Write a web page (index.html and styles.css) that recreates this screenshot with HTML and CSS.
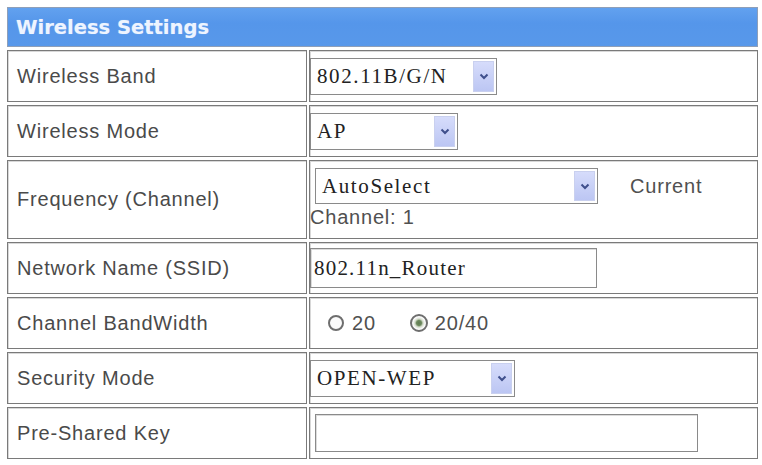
FILE: index.html
```html
<!DOCTYPE html>
<html>
<head>
<meta charset="utf-8">
<title>Wireless Settings</title>
<link rel="stylesheet" href="styles.css">
</head>
<body>
<div class="settings">
  <div class="head">Wireless Settings</div>

  <div class="label">Wireless Band</div>
  <div class="value">
    <div class="select w-band"><span class="val">802.11B/G/N</span><span class="btn"><svg viewBox="0 0 10 7" width="10" height="7"><path d="M1.5 1.5 L5 5 L8.5 1.5" fill="none" stroke="#3f4f8c" stroke-width="2"/></svg></span></div>
  </div>

  <div class="label">Wireless Mode</div>
  <div class="value">
    <div class="select w-mode"><span class="val">AP</span><span class="btn"><svg viewBox="0 0 10 7" width="10" height="7"><path d="M1.5 1.5 L5 5 L8.5 1.5" fill="none" stroke="#3f4f8c" stroke-width="2"/></svg></span></div>
  </div>

  <div class="label">Frequency (Channel)</div>
  <div class="value freq">
    <div class="freq-line">
      <div class="select w-freq"><span class="val">AutoSelect</span><span class="btn"><svg viewBox="0 0 10 7" width="10" height="7"><path d="M1.5 1.5 L5 5 L8.5 1.5" fill="none" stroke="#3f4f8c" stroke-width="2"/></svg></span></div>
      <span class="note current">Current</span>
    </div>
    <div class="note channel">Channel: 1</div>
  </div>

  <div class="label">Network Name (SSID)</div>
  <div class="value">
    <div class="input w-ssid">802.11n_Router</div>
  </div>

  <div class="label">Channel BandWidth</div>
  <div class="value radios">
    <span class="radio"></span><span class="note rtext">20</span>
    <span class="radio checked"></span><span class="note rtext">20/40</span>
  </div>

  <div class="label">Security Mode</div>
  <div class="value">
    <div class="select w-sec"><span class="val">OPEN-WEP</span><span class="btn"><svg viewBox="0 0 10 7" width="10" height="7"><path d="M1.5 1.5 L5 5 L8.5 1.5" fill="none" stroke="#3f4f8c" stroke-width="2"/></svg></span></div>
  </div>

  <div class="label">Pre-Shared Key</div>
  <div class="value">
    <div class="input w-psk"></div>
  </div>
</div>
</body>
</html>
```
FILE: styles.css
```css
html, body {
  margin: 0;
  padding: 0;
  background: #ffffff;
}

.settings {
  display: grid;
  grid-template-columns: 300px 449px;
  grid-template-rows: 40px 52px 52px 79px 52px 52px 52px 52px;
  column-gap: 2px;
  row-gap: 3px;
  margin: 7px 0 0 7px;
  width: 751px;
}

.head {
  grid-column: 1 / 3;
  box-sizing: border-box;
  border: 1px solid #8f9fb8;
  background: linear-gradient(#62a1ef, #5596ea 40%, #5898ea);
  color: #eef4ff;
  font-family: "DejaVu Sans", Verdana, sans-serif;
  font-weight: bold;
  font-size: 19.5px;
  display: flex;
  align-items: center;
  padding-left: 8px;
  text-shadow: 0 0 1px rgba(255,255,255,0.4);
}

.label,
.value {
  box-sizing: border-box;
  border: 1px solid #7a7a7a;
  box-shadow: inset 1px 1px 0 #d8d8d8;
  background: #fff;
  display: flex;
  align-items: center;
}

.label {
  padding-left: 9px;
  font-family: "Liberation Sans", Arial, sans-serif;
  font-size: 20px;
  letter-spacing: 0.8px;
  color: #4a4a4a;
}

.value {
  padding-left: 0;
}

.select {
  box-sizing: border-box;
  height: 37px;
  border: 1px solid #8a8a8a;
  background: #fff;
  display: flex;
  align-items: stretch;
  padding: 2px;
  font-family: "Liberation Serif", "Times New Roman", serif;
  font-size: 21px;
  letter-spacing: 1.6px;
  color: #222;
}

.select .val {
  flex: 1;
  display: flex;
  align-items: center;
  padding-left: 4px;
  white-space: nowrap;
  overflow: hidden;
}

.select .btn {
  width: 21px;
  background: linear-gradient(#d6dcfb, #bcc6f3);
  border: 1px solid #c9d0ef;
  box-sizing: border-box;
  display: flex;
  align-items: center;
  justify-content: center;
}

.w-band { width: 187px; }
.w-mode { width: 148px; }
.w-freq { width: 283px; height: 36px; margin-left: 5px; }
.w-sec { width: 205px; }

.input {
  box-sizing: border-box;
  border: 1px solid #8a8a8a;
  box-shadow: inset 1px 1px 0 #dcdcdc;
  background: #fff;
  display: flex;
  align-items: center;
  padding-left: 3px;
  font-family: "Liberation Serif", "Times New Roman", serif;
  font-size: 21px;
  letter-spacing: 1.2px;
  color: #222;
}

.w-ssid { width: 287px; height: 40px; }
.w-psk { width: 383px; height: 38px; margin-left: 5px; }

.note {
  font-family: "Liberation Sans", Arial, sans-serif;
  font-size: 20px;
  letter-spacing: 0.8px;
  color: #505050;
}

.freq {
  flex-direction: column;
  align-items: flex-start;
  justify-content: flex-start;
  padding-top: 7px;
}

.freq-line {
  display: flex;
  align-items: center;
}

.current {
  margin-left: 32px;
}

.channel {
  margin-top: 1px;
  line-height: 24px;
}

.radios {
  padding-left: 18px;
}

.radio {
  box-sizing: border-box;
  width: 16px;
  height: 16px;
  border-radius: 50%;
  border: 2px solid #6e6e6e;
  background: #fbfbfb;
  margin-right: 8px;
}

.radio.checked {
  margin-left: 34px;
  margin-right: 7px;
  width: 18px;
  height: 18px;
  background: radial-gradient(circle, #5f7a52 0, #6d8a5e 2.5px, #d4dccb 4px, #fafafa 6px);
}
```
